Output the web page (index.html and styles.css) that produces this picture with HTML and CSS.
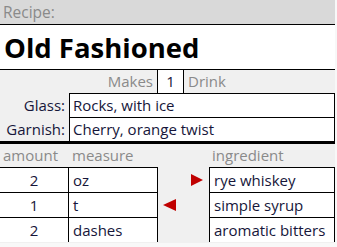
FILE: index.html
```html
<!DOCTYPE html>
<html lang="en">
<head>
    <meta charset="UTF-8">
    <meta name="viewport" content="width=device-width, initial-scale=1.0">
    <title>Recipe card</title>
    <link rel="stylesheet" href="styles.css">
</head>
<body>
    <div class="sheet">
        <div class="bar">Recipe:</div>
        <div class="title">Old Fashioned</div>

        <div class="makes">
            <span class="makes-label">Makes</span>
            <span class="makes-count">1</span>
            <span class="makes-unit">Drink</span>
        </div>

        <div class="details">
            <div class="detail-label">Glass:</div>
            <div class="detail-value">Rocks, with ice</div>
            <div class="detail-label">Garnish:</div>
            <div class="detail-value">Cherry, orange twist</div>
        </div>

        <div class="ing-head">
            <span>amount</span>
            <span>measure</span>
            <span></span>
            <span>ingredient</span>
        </div>

        <div class="ing-table">
            <div class="cell amount">2</div>
            <div class="cell measure">oz</div>
            <div class="gap gap-right">
                <svg width="12" height="12" viewBox="0 0 12 12"><polygon points="0,0 12,6 0,12" fill="#c00000"/></svg>
            </div>
            <div class="cell ingredient">rye whiskey</div>

            <div class="cell amount">1</div>
            <div class="cell measure">t</div>
            <div class="gap gap-left">
                <svg width="13" height="12" viewBox="0 0 13 12"><polygon points="13,0 0,6 13,12" fill="#c00000"/></svg>
            </div>
            <div class="cell ingredient">simple syrup</div>

            <div class="cell amount">2</div>
            <div class="cell measure">dashes</div>
            <div class="gap"></div>
            <div class="cell ingredient">aromatic bitters</div>
        </div>
    </div>
</body>
</html>
```

FILE: styles.css
```css
body {
    margin: 0;
    background: #f8f8f8;
    font-family: "Open Sans", "Liberation Sans", sans-serif;
    font-size: 15px;
    color: #16163a;
}

.sheet {
    width: 335px;
    height: 243px;
    background: #f0f0f0;
    overflow: hidden;
}

.bar {
    height: 24px;
    line-height: 24px;
    padding-left: 3px;
    background: #d9d9d9;
    color: #8a8a8a;
    font-size: 15.5px;
    border-bottom: 1px solid #000;
}

.title {
    height: 44px;
    display: flex;
    align-items: center;
    padding-left: 4px;
    background: #fff;
    border-bottom: 1px solid #000;
    font-size: 27.5px;
    font-weight: 700;
    color: #000;
}

.makes {
    display: grid;
    grid-template-columns: 157px 27px 1fr;
    height: 23px;
    line-height: 23px;
}

.makes-label {
    text-align: right;
    padding-right: 4px;
    color: #8a8a8a;
}

.makes-count {
    background: #fff;
    border-left: 1px solid #000;
    border-right: 1px solid #000;
    text-align: center;
}

.makes-unit {
    padding-left: 4px;
    color: #8a8a8a;
}

.details {
    display: grid;
    grid-template-columns: 69px 1fr;
    grid-auto-rows: 24px;
    border-bottom: 3px solid #000;
}

.detail-label {
    text-align: right;
    padding-right: 4px;
    line-height: 24px;
}

.detail-value {
    background: #fff;
    border: 1px solid #000;
    border-bottom: none;
    padding-left: 3px;
    line-height: 23px;
}

.ing-head {
    display: grid;
    grid-template-columns: 69px 89px 51px 126px;
    height: 23px;
    line-height: 23px;
    color: #8a8a8a;
}

.ing-head span {
    padding-left: 3px;
}

.ing-table {
    display: grid;
    grid-template-columns: 69px 89px 51px 126px;
    grid-auto-rows: 25px;
}

.cell {
    background: #fff;
    border-top: 1px solid #000;
    line-height: 24px;
    padding-left: 4px;
}

.amount {
    text-align: center;
    padding-left: 0;
    border-right: 1px solid #000;
}

.measure {
    border-right: 1px solid #000;
}

.ingredient {
    border-left: 1px solid #000;
    border-right: 1px solid #000;
}

.gap {
    display: flex;
    align-items: center;
}

.gap-right {
    justify-content: flex-end;
    padding-right: 6px;
}

.gap-left {
    padding-left: 5px;
}
```
